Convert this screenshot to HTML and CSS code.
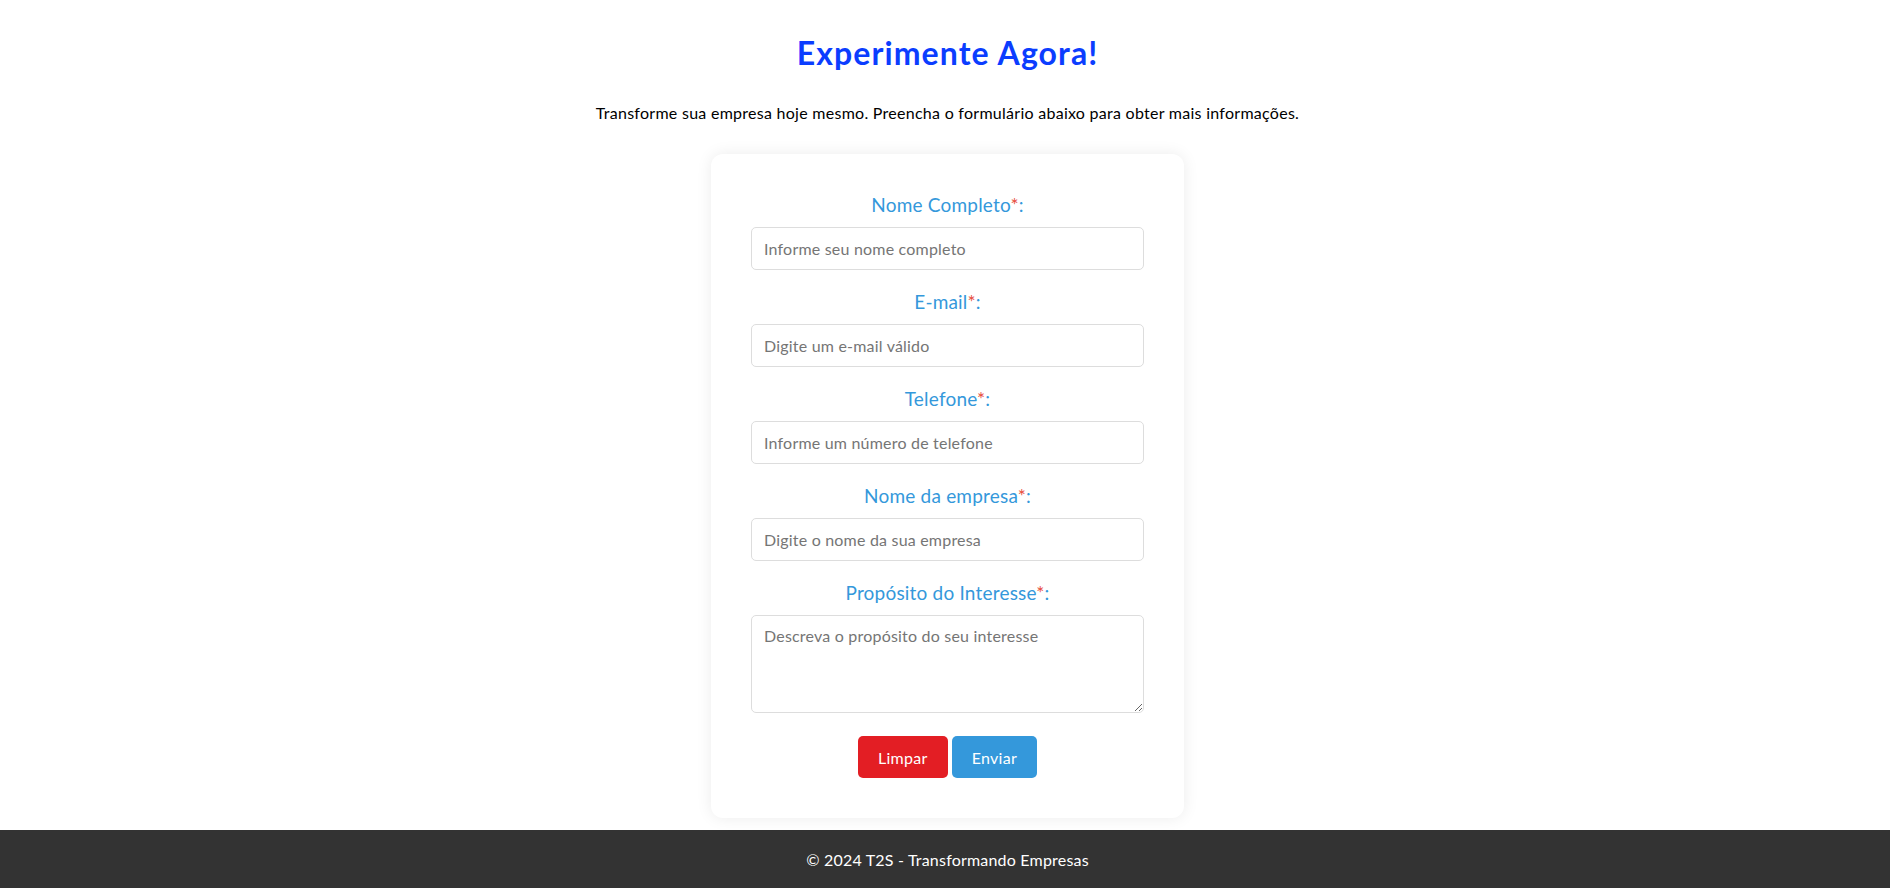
FILE: index.html
```html
<!DOCTYPE html>
<html lang="pt-BR">
<head>
<meta charset="utf-8">
<title>Experimente Agora!</title>
<link rel="stylesheet" href="styles.css">
</head>
<body>
<main class="page">
  <section class="intro">
    <h1 class="title">Experimente Agora!</h1>
    <p class="lead">Transforme sua empresa hoje mesmo. Preencha o formulário abaixo para obter mais informações.</p>
  </section>
  <form class="card">
    <label class="label" for="nome">Nome Completo<span class="req">*</span>:</label>
    <input class="field" id="nome" type="text" placeholder="Informe seu nome completo">
    <label class="label" for="email">E-mail<span class="req">*</span>:</label>
    <input class="field" id="email" type="email" placeholder="Digite um e-mail válido">
    <label class="label" for="tel">Telefone<span class="req">*</span>:</label>
    <input class="field" id="tel" type="tel" placeholder="Informe um número de telefone">
    <label class="label" for="empresa">Nome da empresa<span class="req">*</span>:</label>
    <input class="field" id="empresa" type="text" placeholder="Digite o nome da sua empresa">
    <label class="label" for="prop">Propósito do Interesse<span class="req">*</span>:</label>
    <textarea class="field area" id="prop" placeholder="Descreva o propósito do seu interesse"></textarea>
    <div class="actions">
      <button class="btn btn-clear" type="reset">Limpar</button>
      <button class="btn btn-send" type="submit">Enviar</button>
    </div>
  </form>
</main>
<footer class="footer">© 2024 T2S - Transformando Empresas</footer>
</body>
</html>
```

FILE: styles.css
```css
* { box-sizing: border-box; }
html, body { margin: 0; padding: 0; }
body {
  font-family: Lato, "Open Sans", sans-serif;
  color: #000;
  background: #fff;
}
.page {
  display: flex;
  flex-direction: column;
  align-items: center;
  padding: 34px 0 0 5px;
}
.intro { text-align: center; }
.title {
  margin: 0;
  font-size: 32px;
  line-height: 37px;
  font-weight: 700;
  letter-spacing: 1.1px;
  color: #0b3dff;
}
.lead {
  margin: 32px 0 0;
  font-size: 16px;
  line-height: 19px;
  letter-spacing: 0.27px;
}
.card {
  margin: 32px 0 12px;
  width: 473px;
  padding: 40px;
  background: #fff;
  border-radius: 12px;
  box-shadow: 0 0 16px rgba(0, 0, 0, 0.08);
  display: flex;
  flex-direction: column;
}
.label {
  display: block;
  text-align: center;
  font-size: 19px;
  line-height: 22px;
  letter-spacing: 0.2px;
  color: #3498db;
  margin-bottom: 11px;
}
.req { color: #e74c3c; }
.field {
  display: block;
  width: 100%;
  height: 43px;
  margin: 0 0 21px;
  padding: 0 12px;
  border: 1px solid #ddd;
  border-radius: 5px;
  font-family: inherit;
  font-size: 16px;
  letter-spacing: 0.2px;
  color: #333;
  background: #fff;
}
.field::placeholder { color: #757575; }
.area {
  height: 98px;
  padding: 10px 12px;
  margin-bottom: 23px;
  resize: vertical;
}
.actions {
  display: flex;
  justify-content: center;
  gap: 4px;
}
.btn {
  height: 42px;
  padding: 0 20px;
  border: none;
  border-radius: 5px;
  color: #fff;
  font-family: inherit;
  font-size: 16px;
  letter-spacing: 0.3px;
  cursor: pointer;
}
.btn-clear { background: #e31e24; }
.btn-send { background: #3498db; }
.footer {
  height: 58px;
  display: flex;
  align-items: center;
  justify-content: center;
  padding-left: 5px;
  background: #333;
  color: #fff;
  font-size: 16px;
  letter-spacing: 0.2px;
}
```
